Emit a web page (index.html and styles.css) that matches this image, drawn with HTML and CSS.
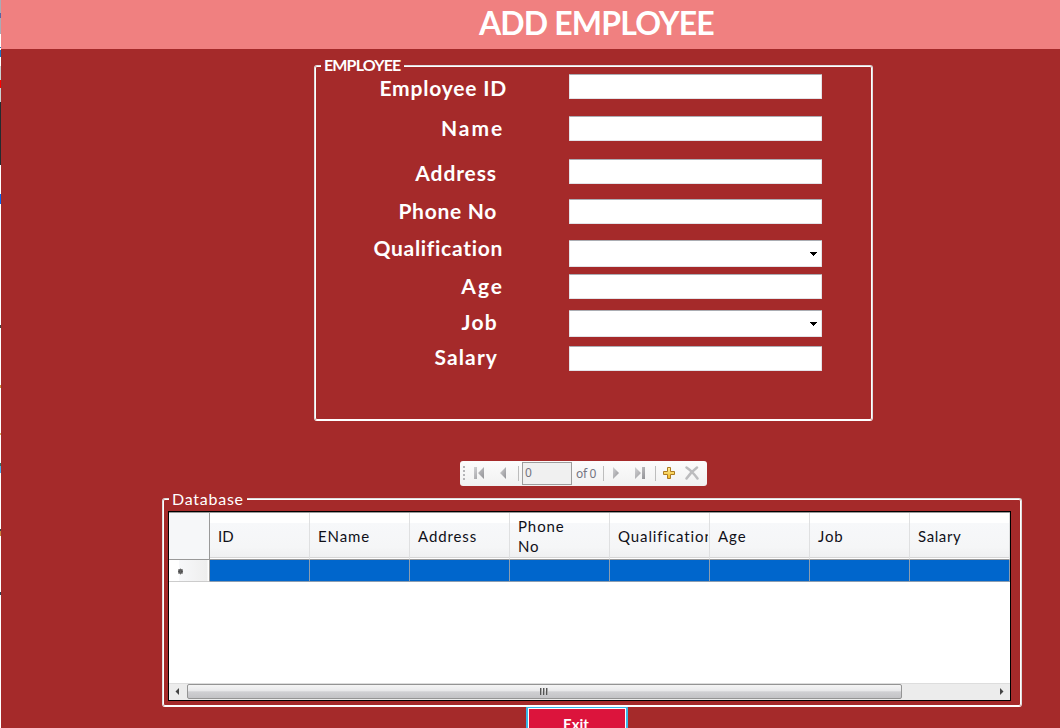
FILE: index.html
```html
<!DOCTYPE html>
<html lang="en">
<head>
<meta charset="utf-8">
<title>Add Employee</title>
<link rel="stylesheet" href="styles.css">
</head>
<body>
<div class="edge"></div>
<main class="window">
  <header class="banner"><h1 class="title">ADD EMPLOYEE</h1></header>
  <section class="group employee">
    <div class="legend legend-bold">EMPLOYEE</div>
    <div class="row r1"><label class="l-id">Employee ID</label><div class="field"></div></div>
    <div class="row r2"><label class="l-name">Name</label><div class="field"></div></div>
    <div class="row r3"><label class="l-address">Address</label><div class="field"></div></div>
    <div class="row r4"><label class="l-phone">Phone No</label><div class="field"></div></div>
    <div class="row r5"><label class="l-qual">Qualification</label><div class="field combo"><svg width="7" height="4" shape-rendering="crispEdges"><path d="M0 0h7v1H6v1H5v1H4v1H3V3H2V2H1V1H0z"/></svg></div></div>
    <div class="row r6"><label class="l-age">Age</label><div class="field"></div></div>
    <div class="row r7"><label class="l-job">Job</label><div class="field combo"><svg width="7" height="4" shape-rendering="crispEdges"><path d="M0 0h7v1H6v1H5v1H4v1H3V3H2V2H1V1H0z"/></svg></div></div>
    <div class="row r8"><label class="l-salary">Salary</label><div class="field"></div></div>
  </section>
  <nav class="toolbar">
    <svg class="grip" width="2" height="15"><path d="M1 0v15" stroke="#b5b5b8" stroke-width="2" stroke-dasharray="2 2"/></svg>
    <svg class="first" width="11" height="12"><defs><linearGradient id="g" x2="1" y2="1"><stop stop-color="#d2d2d4"/><stop offset="1" stop-color="#929296"/></linearGradient></defs><path d="M0 0h3v12H0zM10 0v12L4 6z" fill="url(#g)"/></svg>
    <svg class="prev" width="6" height="12"><path d="M6 0v12L0 6z" fill="url(#g)"/></svg>
    <i class="sep s1"></i>
    <div class="position">0</div>
    <span class="count">of 0</span>
    <i class="sep s2"></i>
    <svg class="next" width="6" height="12"><path d="M0 0v12L6 6z" fill="url(#g)"/></svg>
    <svg class="last" width="11" height="12"><path d="M0 0v12L6 6zM7 0h3v12H7z" fill="url(#g)"/></svg>
    <i class="sep s3"></i>
    <svg class="add" width="12" height="12"><defs><linearGradient id="y" x2="0" y2="1"><stop stop-color="#fff0a0"/><stop offset="1" stop-color="#f2b91f"/></linearGradient></defs><path d="M4.5.5h3v4h4v3h-4v4h-3v-4h-4v-3h4z" fill="url(#y)" stroke="#ad7b20"/></svg>
    <svg class="delete" width="14" height="14"><path d="M1.5 1.5Q7 5 12.500 12.500M12 1.500Q6 6 1.500 12.500" fill="none" stroke="#bcbcbe" stroke-width="2.500" stroke-linecap="round"/></svg>
  </nav>
  <section class="group database">
    <div class="legend legend-db">Database</div>
    <div class="grid">
      <div class="cells">
        <div class="head corner"></div>
        <div class="head"><span class="h-id">ID</span></div>
        <div class="head"><span>EName</span></div>
        <div class="head"><span>Address</span></div>
        <div class="head"><span>Phone<br>No</span></div>
        <div class="head clip"><span>Qualification</span></div>
        <div class="head"><span>Age</span></div>
        <div class="head"><span>Job</span></div>
        <div class="head"><span class="h-salary">Salary</span></div>
        <div class="rowhead"><svg width="7" height="7"><circle cx="3.500" cy="3.500" r="2.400" fill="#444"/><path d="M3.500 .5v6M1 1.500l5 4M6 1.500l-5 4" stroke="#666" stroke-width=".8"/></svg></div>
        <div class="cell"></div><div class="cell"></div><div class="cell"></div><div class="cell"></div>
        <div class="cell"></div><div class="cell"></div><div class="cell"></div><div class="cell"></div>
      </div>
      <div class="scroll">
        <svg class="arrow" width="18" height="16"><path d="M10 4v7L6.500 7.500z" fill="#444"/></svg>
        <div class="thumb"><svg width="8" height="7" shape-rendering="crispEdges"><path d="M0 0h2v7H0zM3 0h2v7H3zM6 0h2v7H6z" fill="#aaa"/><path d="M0 0h1v7H0zM3 0h1v7H3zM6 0h1v7H6z" fill="#555"/></svg></div>
        <svg class="arrow right" width="18" height="16"><path d="M8 4v7l3.500-3.500z" fill="#444"/></svg>
      </div>
    </div>
  </section>
  <button class="exit">Exit</button>
</main>
</body>
</html>
```
FILE: styles.css
```css
* { box-sizing: border-box; }
body {
  margin: 0;
  width: 1060px;
  height: 728px;
  overflow: hidden;
  display: flex;
  font-family: "Century Gothic", Lato, sans-serif;
  background: #a52a2a;
}
svg { display: block; flex: none; }
.edge {
  width: 1px;
  flex: none;
  background: linear-gradient(#aaaab4 0 13px, #5865a4 13px 18px, #aaaab4 18px 34px, #fff 34px 47px, #1976c8 47px 48px, #fff 48px 50px, #1976c8 50px 57px, #fff 57px 66px, #c8d2d2 66px 80px, #f00 80px 88px, #c8d2d2 88px 102px, #242b2f 102px 165px, #fff 165px 194px, #0a66f0 194px 204px, #fff 204px 325px, #444 325px 328px, #fff 328px 385px, #c89040 385px 388px, #fff 388px 433px, #d5ae60 433px 435px, #fff 435px 463px, #377060 463px 466px, #50aef0 466px 473px, #fff 473px 529px, #444 529px 531px, #c8853a 531px 536px, #fff 536px 592px, #345 592px 595px, #fff 595px);
}
.window { width: 1059px; flex: none; display: flex; flex-direction: column; }
.banner {
  height: 49px;
  flex: none;
  background: #f08080;
  padding-left: 478px;
}
.title {
  margin: 0;
  font-size: 32px;
  line-height: 45px;
  font-weight: 700;
  letter-spacing: -0.85px;
  color: #fff;
  white-space: nowrap;
}
.group {
  position: relative;
  flex: none;
  border: 1px solid #dcdcdc;
  border-bottom-color: #fff;
  border-radius: 3px;
  box-shadow: inset 0 0 0 1px #fff;
}
.employee { margin: 16px 0 0 313px; width: 559px; height: 356px; padding-top: 8px; }
.legend {
  position: absolute;
  left: 6px;
  top: -11px;
  padding-left: 3px;
  height: 20px;
  line-height: 20px;
  font-size: 16px;
  color: #fff;
  background: #a52a2a;
  white-space: nowrap;
}
.legend-bold { width: 83px; font-weight: 700; letter-spacing: -0.85px; }
.legend-db { width: 78px; top: -10px; letter-spacing: 0.75px; }
.row { display: flex; align-items: flex-start; }
.row label {
  width: 192px;
  margin-right: 62px;
  text-align: right;
  font-size: 21px;
  line-height: 23px;
  font-weight: 700;
  color: #fff;
  white-space: nowrap;
}
.field {
  width: 253px;
  height: 25px;
  background: #fff;
  border: 1px solid #e3e3e8;
  border-top-color: #abadb3;
  border-radius: 1px;
}
.combo { height: 27px; display: flex; justify-content: flex-end; align-items: center; padding: 0 4px 0 0; }
.r1 { height: 42px; }
.r2 { height: 43px; }
.r3 { height: 40px; }
.r4 { height: 41px; }
.r5 { height: 34px; }
.r6, .r7 { height: 36px; }
.row .l-id { padding: 2px 0 0; letter-spacing: 0.8px; }
.row .l-name { padding-right: 3px; letter-spacing: 1.9px; }
.row .l-address { padding: 2px 10px 0 0; letter-spacing: 0.9px; }
.row .l-phone { padding-right: 10px; letter-spacing: 0.7px; }
.row .l-qual { padding-right: 4px; margin-top: -4px; letter-spacing: 0.7px; }
.row .l-age { padding-right: 3px; letter-spacing: 2px; }
.row .l-job { padding-right: 9px; letter-spacing: 1.3px; }
.row .l-salary { padding-right: 9px; margin-top: -1px; letter-spacing: 1.1px; }
.toolbar {
  margin: 40px 0 0 459px;
  width: 247px;
  height: 25px;
  flex: none;
  display: flex;
  align-items: center;
  padding-left: 3px;
  border-radius: 3px;
  background: linear-gradient(#fcfcfc, #f1f1f1);
  font: 12px "Noto Sans", sans-serif;
  color: #747480;
}
.toolbar svg { margin-top: -1px; }
.toolbar .first { margin-left: 9px; }
.toolbar .prev { margin-left: 15px; }
.sep { width: 1px; height: 15px; background: #bdbdbd; }
.s1 { margin-left: 12px; }
.position { margin-left: 3px; width: 50px; height: 23px; border: 1px solid #9d9d9d; background: #f0f0f0; padding-left: 2px; line-height: 20px; }
.count { margin: -1px 0 0 4px; width: 27px; letter-spacing: -0.3px; white-space: nowrap; }
.toolbar .next { margin-left: 9px; }
.toolbar .last { margin-left: 16px; }
.s3 { margin-left: 9px; }
.toolbar .add { margin-left: 7px; }
.toolbar .delete { margin-left: 10px; }
.database { margin: 12px 0 0 161px; width: 860px; height: 209px; padding: 12px 0 0 5px; }
.grid { width: 843px; height: 190px; border: 1px solid #000; background: #fff; display: flex; flex-direction: column; justify-content: space-between; }
.cells { display: grid; grid-template-columns: 41px repeat(8, 100px); grid-template-rows: 47px 22px; border-top: 1px solid #999; }
.head {
  display: flex;
  align-items: center;
  padding: 0 0 0 8px;
  border-right: 1px solid #dfe0e1;
  border-bottom: 1px solid #999;
  background: linear-gradient(#fff 10px, #f7f8fa 10px, #f5f6f7 34px, #eff0f1 44px, #d5d5d5 44px, #d5d5d5 45px, #fff 45px);
  font-size: 15px;
  line-height: 20px;
  letter-spacing: 0.9px;
  color: #101018;
  white-space: nowrap;
}
.h-id { letter-spacing: 0; }
.h-salary { letter-spacing: 0.6px; }
.corner { background: #f6f7f9; border-right-color: #999; }
.clip span { width: 90px; overflow: hidden; }
.rowhead { display: flex; align-items: center; padding: 2px 0 0 8px; border-right: 1px solid #999; border-bottom: 1px solid #ccc; background: linear-gradient(90deg, #fff 10px, #f7f8fa 10px, #eee 38px, #fff 39px); }
.cell { background: #0066cc; border-right: 1px solid #8b9db0; border-bottom: 1px solid #8b9db0; }
.scroll { display: flex; height: 17px; background: #ececec; border-top: 1px solid #ddd; }
.thumb {
  width: 715px;
  height: 15px;
  border: 1px solid #949494;
  border-radius: 2px;
  background: linear-gradient(#f5f5f5, #e8e8ea 46%, #cfcfd2 52%, #c3c3c6);
  display: flex;
  align-items: center;
  justify-content: center;
  padding-right: 2px;
}
.right { margin-left: auto; }
.exit {
  margin: -1px 0 0 525px;
  width: 102px;
  height: 35px;
  flex: none;
  border: 2px solid #38b8e8;
  border-radius: 2px;
  box-shadow: inset 0 0 0 1px #fff;
  background: #dc143c;
  color: #fff;
  font: bold 15px/26px "Century Gothic", Lato, sans-serif;
  padding: 1px 2px 0 0;
}
```
